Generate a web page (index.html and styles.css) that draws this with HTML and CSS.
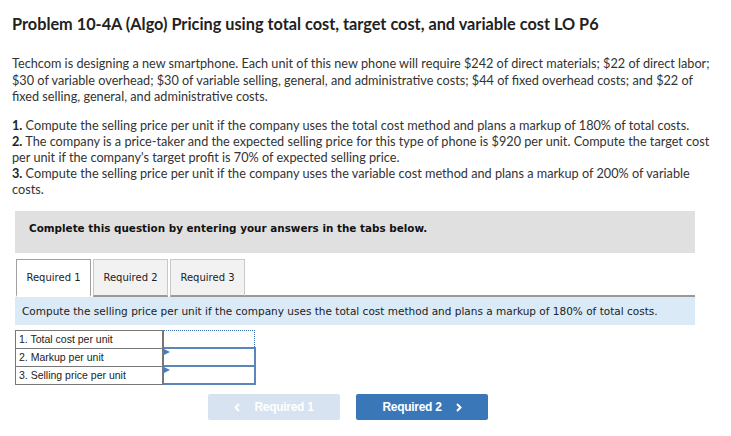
FILE: index.html
```html
<!DOCTYPE html>
<html>
<head>
<meta charset="utf-8">
<link rel="stylesheet" href="styles.css">
</head>
<body>
<div class="page">
  <h1 class="title">Problem 10-4A (Algo) Pricing using total cost, target cost, and variable cost LO P6</h1>
  <p class="intro">Techcom is designing a new smartphone. Each unit of this new phone will require $242 of direct materials; $22 of direct labor; $30 of variable overhead; $30 of variable selling, general, and administrative costs; $44 of fixed overhead costs; and $22 of fixed selling, general, and administrative costs.</p>
  <div class="reqs">
    <div class="req"><b>1.</b> Compute the selling price per unit if the company uses the total cost method and plans a markup of 180% of total costs.</div>
    <div class="req"><b>2.</b> The company is a price-taker and the expected selling price for this type of phone is $920 per unit. Compute the target cost per unit if the company's target profit is 70% of expected selling price.</div>
    <div class="req"><b>3.</b> Compute the selling price per unit if the company uses the variable cost method and plans a markup of 200% of variable costs.</div>
  </div>

  <div class="panel">
    <div class="notice">Complete this question by entering your answers in the tabs below.</div>
    <div class="tabs">
      <div class="tab active">Required 1</div>
      <div class="tab">Required 2</div>
      <div class="tab">Required 3</div>
      <div class="tab-rest"></div>
    </div>
    <div class="instruction">Compute the selling price per unit if the company uses the total cost method and plans a markup of 180% of total costs.</div>
    <table class="answers">
      <tr><td class="label">1. Total cost per unit</td><td class="cell dotted"></td></tr>
      <tr><td class="label">2. Markup per unit</td><td class="cell input"><span class="flag"></span></td></tr>
      <tr><td class="label">3. Selling price per unit</td><td class="cell input"><span class="flag"></span></td></tr>
    </table>
    <div class="nav">
      <div class="btn prev"><svg class="chev left" width="6" height="9" viewBox="0 0 6 9"><path d="M5 1 L1.5 4.5 L5 8" fill="none" stroke="#fff" stroke-width="2"/></svg>Required 1</div>
      <div class="btn next">Required 2<svg class="chev right" width="6" height="9" viewBox="0 0 6 9"><path d="M1 1 L4.5 4.5 L1 8" fill="none" stroke="#fff" stroke-width="2"/></svg></div>
    </div>
  </div>
</div>
</body>
</html>
```
FILE: styles.css
```css
html, body { margin: 0; padding: 0; background: #fff; }
.page { padding: 0 12px; }
.title {
  font-family: "Lato", "Liberation Sans", sans-serif;
  font-weight: 700;
  font-size: 16.3px;
  color: #222;
  margin: 0;
  padding-top: 14px;
  line-height: 20px;
}
.intro, .reqs {
  font-family: "Lato", "Liberation Sans", sans-serif;
  font-size: 12.7px;
  color: #333;
  margin: 0;
  width: 702px;
}
.intro { margin-top: 21px; line-height: 16.5px; }
.reqs { margin-top: 12px; line-height: 16px; }
.req b { font-weight: 700; color: #222; }

.panel { margin-top: 14px; margin-left: 3px; width: 680px; }
.notice {
  background: #e0e0e0;
  height: 42px;
  box-sizing: border-box;
  padding: 11px 14px;
  font-family: "DejaVu Sans", Verdana, sans-serif;
  font-weight: 700;
  font-size: 10.4px;
  line-height: 12px;
  color: #111;
}
.tabs { display: flex; margin-top: 6px; height: 38px; gap: 2px; }
.tab {
  width: 75px;
  box-sizing: border-box;
  border: 1px solid #c8c8c8;
  border-bottom: 2px solid #999;
  background: #f2f2f2;
  font-family: "DejaVu Sans", Verdana, sans-serif;
  font-size: 10px;
  color: #222;
  display: flex; align-items: center; justify-content: center;
  padding-top: 1px;
}
.tab.active { background: #fff; border-color: #a0a0a0; border-bottom: 2px solid #fff; margin-left: 1px; }
.tab-rest { flex: 1; border-bottom: 2px solid #999; margin-left: -2px; }
.instruction {
  background: #daeaf7;
  height: 28px;
  box-sizing: border-box;
  padding: 8px 7px;
  font-family: "DejaVu Sans", Verdana, sans-serif;
  font-size: 10.5px;
  line-height: 12px;
  color: #222;
}
.answers {
  margin-top: 5px;
  border-collapse: collapse;
  font-family: "Liberation Sans", Arial, sans-serif;
  font-size: 10.5px;
  color: #222;
}
.answers td { padding: 0; height: 18px; box-sizing: border-box; }
.label { width: 147px; border: 1px solid #777; border-right: 2px solid #777; padding-left: 3px !important; }
.cell { width: 92px; position: relative; }
.dotted { border: 1px dotted #3a6fb5; }
.input { border: 2px solid #5b86b8; }
.flag {
  position: absolute; left: 0; top: 0;
  width: 0; height: 0;
  border-top: 3px solid transparent;
  border-bottom: 3px solid transparent;
  border-left: 6px solid #4a7cc0;
}
.nav { display: flex; justify-content: center; gap: 16px; margin-top: 9px; margin-right: 14px; }
.btn {
  width: 132px; height: 26px;
  border-radius: 2px;
  font-family: "Liberation Sans", Arial, sans-serif;
  font-weight: 700;
  font-size: 12px;
  color: #fff;
  display: flex; align-items: center; justify-content: center;
  letter-spacing: -0.3px;
}
.prev { background: #d7e3f0; }
.next { background: #3a77b9; }
.chev { display: block; }
.chev.left { margin-right: 14px; }
.chev.right { margin-left: 14px; }
```
